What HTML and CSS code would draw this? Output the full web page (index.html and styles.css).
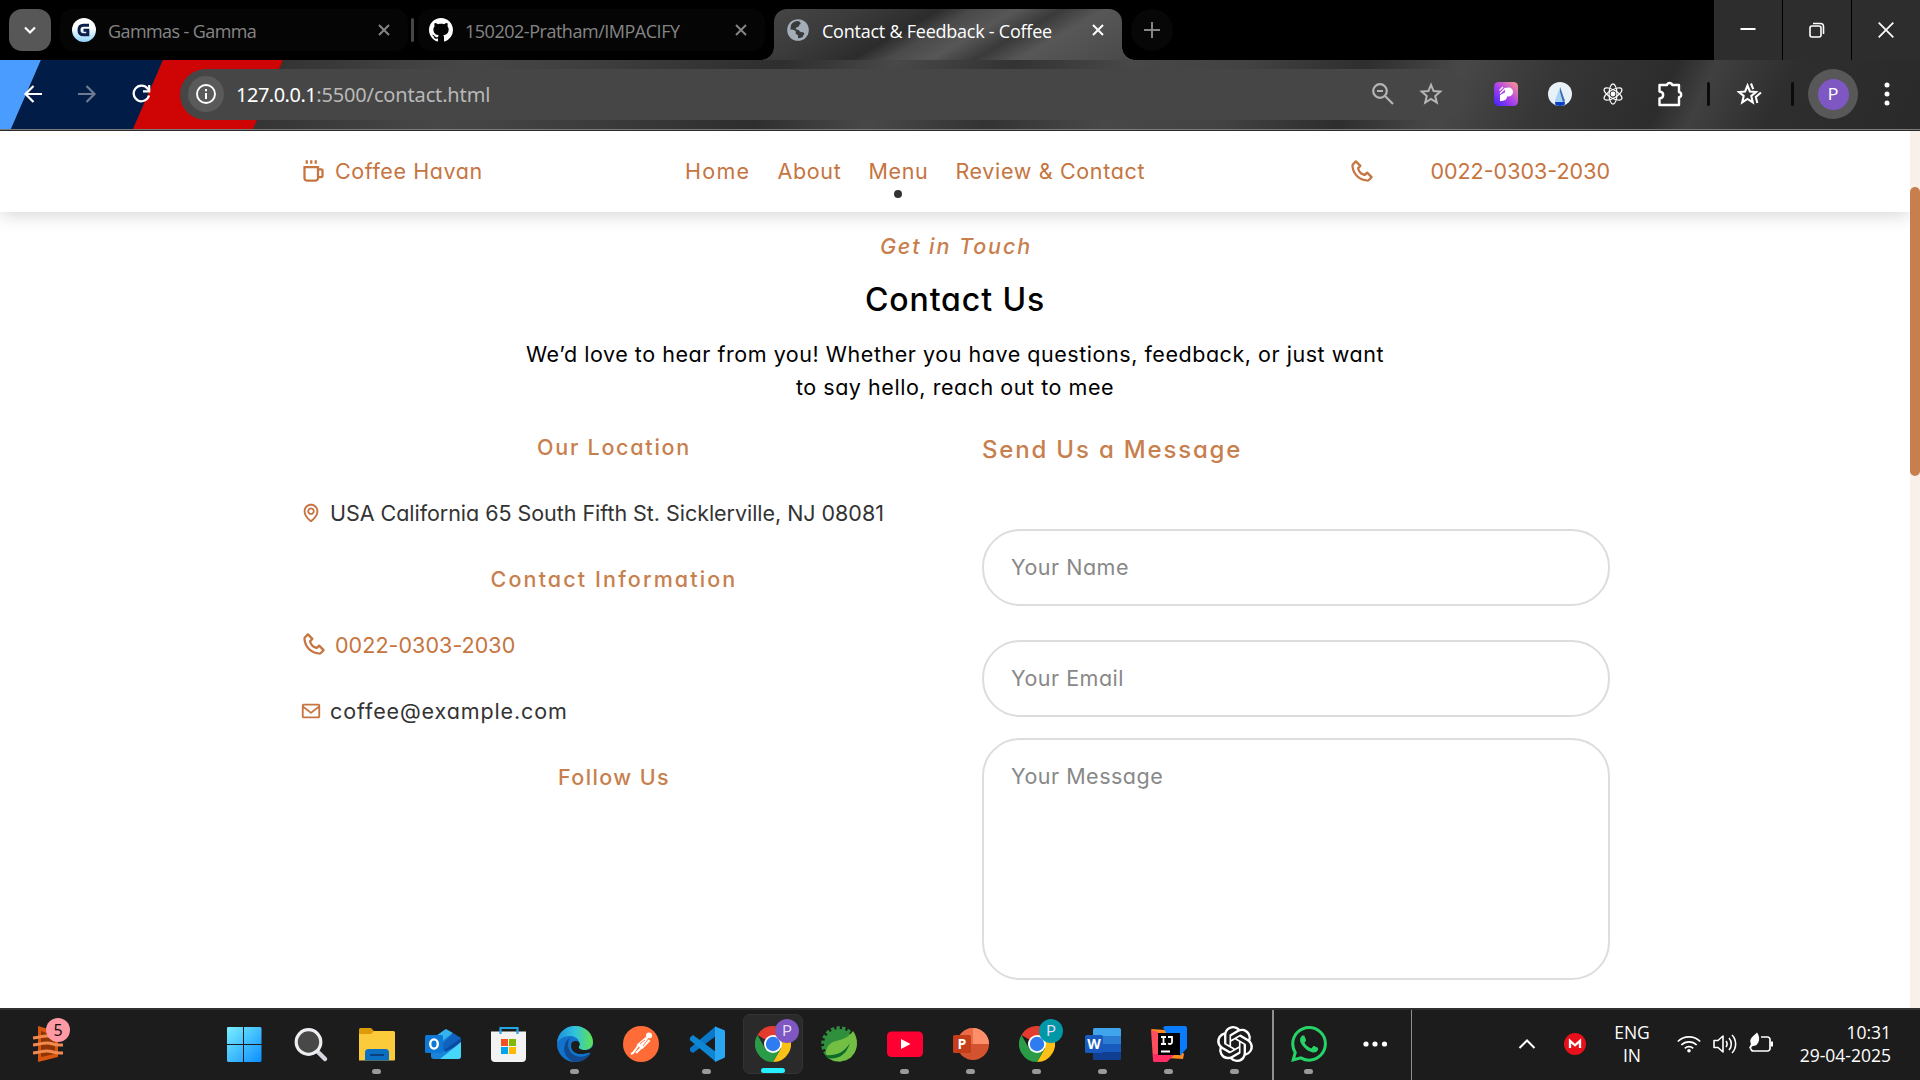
FILE: index.html
```html
<!DOCTYPE html>
<html lang="en">
<head>
<meta charset="utf-8">
<title>Contact &amp; Feedback - Coffee</title>
<link rel="stylesheet" href="styles.css">
</head>
<body>
<svg class="defs" width="0" height="0">
  <symbol id="i-close" viewBox="0 0 14 14"><path d="M2 2l10 10M12 2L2 12" fill="none" stroke="currentColor" stroke-width="2"/></symbol>
  <symbol id="i-phone" viewBox="0 0 24 24"><path fill="currentColor" d="M17.707 12.293a.999.999 0 0 0-1.414 0l-1.594 1.594c-.739-.22-2.118-.72-2.992-1.594s-1.374-2.253-1.594-2.992l1.594-1.594a.999.999 0 0 0 0-1.414l-4-4a.999.999 0 0 0-1.414 0L3.581 5.005c-.38.38-.594.902-.586 1.435.023 1.424.4 6.37 4.298 10.268s8.844 4.274 10.269 4.298h.028c.528 0 1.027-.208 1.405-.586l2.712-2.712a.999.999 0 0 0 0-1.414l-4-4.001zm-.127 6.712c-1.248-.021-5.518-.356-8.873-3.712-3.366-3.366-3.692-7.651-3.712-8.874L7 4.414 9.586 7 8.293 8.293a1 1 0 0 0-.272.912c.024.115.611 2.842 2.271 4.502s4.387 2.247 4.502 2.271a.991.991 0 0 0 .912-.271L17 14.414 19.586 17l-2.006 2.005z"/></symbol>
  <symbol id="i-chrome" viewBox="0 0 36 36">
    <path fill="#e33b2e" d="M18 18 2.4 9A18 18 0 0 1 33.6 9H18z"/>
    <path fill="#fbc116" d="M18 9h15.6A18 18 0 0 1 18 36l7.8-13.5z"/>
    <path fill="#2a9b47" d="M2.4 9A18 18 0 0 0 18 36l7.8-13.5L18 18l-7.8 4.5z"/>
    <circle cx="18" cy="18" r="9" fill="#fff"/><circle cx="18" cy="18" r="7.2" fill="#2f7bf0"/>
  </symbol>
</svg>

<div class="screen">
  <header class="tabstrip">
    <button class="tab-search"><svg width="14" height="14" viewBox="0 0 14 14"><path d="M2 4.5l5 5 5-5" fill="none" stroke="#fff" stroke-width="2.2"/></svg></button>
    <div class="tab">
      <svg class="favicon" width="24" height="24" viewBox="0 0 24 24"><defs><linearGradient id="gg" x2="0" y2="1"><stop offset=".4" stop-color="#fff"/><stop offset="1" stop-color="#8fd4fb"/></linearGradient></defs><circle cx="12" cy="12" r="12" fill="url(#gg)"/><path d="M17 7.200H11.500C8.500 7.200 7 9 7 12c0 3 1.800 4.800 4.500 4.800h4.300v-4.600h-4.300" fill="none" stroke="#0c1f4a" stroke-width="3"/></svg>
      <span class="tab-title gamma">Gammas - Gamma</span>
      <svg class="x" width="14" height="14"><use href="#i-close"/></svg>
    </div>
    <i class="tab-sep"></i>
    <div class="tab second">
      <svg class="favicon" width="24" height="24" viewBox="0 0 16 16"><path fill="#fff" d="M8 0C3.580 0 0 3.580 0 8c0 3.540 2.290 6.530 5.470 7.590.4.070.55-.17.55-.38 0-.19-.01-.82-.01-1.490-2.010.37-2.530-.49-2.690-.94-.09-.23-.48-.94-.82-1.130-.28-.15-.68-.52-.01-.53.63-.01 1.080.58 1.230.82.72 1.210 1.870.87 2.330.66.070-.52.28-.87.51-1.070-1.780-.2-3.640-.89-3.640-3.950 0-.87.31-1.590.82-2.150-.08-.2-.36-1.020.08-2.120 0 0 .67-.21 2.200.82.64-.18 1.320-.27 2-.27s1.360.09 2 .27c1.530-1.040 2.200-.82 2.200-.82.44 1.100.16 1.920.08 2.120.51.56.82 1.270.82 2.150 0 3.070-1.870 3.750-3.650 3.950.29.25.54.73.54 1.480 0 1.070-.01 1.930-.01 2.200 0 .21.15.46.55.38A8.010 8.010 0 0 0 16 8c0-4.420-3.580-8-8-8z"/></svg>
      <span class="tab-title repo">150202-Pratham/IMPACIFY</span>
      <svg class="x" width="14" height="14"><use href="#i-close"/></svg>
    </div>
    <div class="tab active">
      <svg class="favicon" width="24" height="24" viewBox="0 0 24 24"><circle cx="12" cy="12" r="10.800" fill="#a3adb8"/><path d="M12.500 3c-4 0-6 1.500-7.500 4l-.6 4.500c2 .3 3.600.2 5 1.500 1.200 1.200-.4 2 .6 3 .9.800 2 .3 2 2v2.200c2.500 0 4-.5 5-1.700-.2-1.400 1.500-1.600 1.200-3.200-.5-1.400-2-1-3.300-1.300-1.500-.4-1.700-1.800-3-2.200-1.600-.4-2.400-.5-2.200-1.500.3-1.200 2-.8 3-1.800.8-1 .3-2 1.500-2.300 1-.3.500-1.700-1.700-3.200z" fill="#393a3c"/></svg>
      <span class="tab-title coffee">Contact &amp; Feedback - Coffee</span>
      <svg class="x" width="14" height="14"><use href="#i-close"/></svg>
    </div>
    <button class="newtab"><svg width="16" height="16" viewBox="0 0 16 16"><path d="M8 0v16M0 8h16" stroke="#858585" stroke-width="2"/></svg></button>
    <div class="winbtns">
      <span><svg width="16" height="16"><path d="M0.500 7h15" stroke="#fff" stroke-width="2"/></svg></span>
      <span><svg width="16" height="16" viewBox="0 0 16 16" fill="none" stroke="#fff" stroke-width="1.600"><rect x="1" y="4" width="11" height="11" rx="2"/><path d="M4 1.500h7.500a3 3 0 0 1 3 3V12"/></svg></span>
      <span><svg width="16" height="16"><path d="M.7.700l14.600 14.600M15.300.7L.7 15.300" stroke="#fff" stroke-width="1.700"/></svg></span>
    </div>
  </header>

  <div class="toolbar">
    <svg class="stripes" width="284" height="69" viewBox="0 0 284 69"><path fill="#4a9cff" d="M0 0h41L11 69H0z"/><path fill="#001c47" d="M41 0h122l-30 69H11z"/><path fill="#cf0404" d="M163 0h120l-30 69H133z"/></svg>
    <div class="navbtns">
      <svg width="18" height="18" viewBox="0 0 18 18"><path d="M18 9H2M9.500 1L1.500 9l8 8" fill="none" stroke="#fff" stroke-width="2.200"/></svg>
      <svg width="18" height="18" viewBox="0 0 18 18"><path d="M0 9h16M8.500 1l8 8-8 8" fill="none" stroke="#6f7b92" stroke-width="2.200"/></svg>
      <svg width="20" height="20" viewBox="0 0 20 20"><path d="M17 11.500A7.800 7.800 0 1 1 15.500 4.500l2 2.300" fill="none" stroke="#fff" stroke-width="2.200"/><path d="M18.300 1v7.500H11V6.300h5.100V1z" fill="#fff"/></svg>
    </div>
    <div class="omnibox">
      <span class="info"><svg width="20" height="20" viewBox="0 0 20 20"><circle cx="10" cy="10" r="9" fill="none" stroke="#fff" stroke-width="1.900"/><path d="M10 9v6M10 5v2.200" stroke="#fff" stroke-width="2"/></svg></span>
      <span class="url"><b>127.0.0.1</b><span>:5500/contact.html</span></span>
      <svg class="om-zoom" width="22" height="22" viewBox="0 0 22 22" fill="none" stroke="#b5b5b5" stroke-width="2.200"><circle cx="8" cy="8" r="6.800"/><path d="M5 8h6M13 13l8 8"/></svg>
      <svg class="om-star" width="24" height="24" viewBox="0 0 24 24"><path d="M12 2.800l2.600 6.300 6.700.5-5.100 4.400 1.600 6.600L12 17l-5.800 3.600L7.800 14 2.700 9.600l6.700-.5z" fill="none" stroke="#b5b5b5" stroke-width="2"/></svg>
    </div>
    <div class="exts">
      <svg width="24" height="24" viewBox="0 0 24 24"><defs><linearGradient id="pg" x1="0" y1="1" x2="1" y2="0"><stop offset="0" stop-color="#3a22ff"/><stop offset=".5" stop-color="#b044e8"/><stop offset="1" stop-color="#ff9a8a"/></linearGradient></defs><rect width="24" height="24" rx="4.500" fill="url(#pg)"/><path d="M6 19v-6l5-2.500V6.500c4-2 8-.5 8 3.500 0 3.200-2.500 4.800-6 4.500-.3 3-2 4.500-7 4.500z" fill="#fff"/><path d="M5.500 8.500l3.500-3.500M6 11.500l5.500-5.500" stroke="#fff" stroke-width="1.200"/></svg>
      <svg width="24" height="24" viewBox="0 0 24 24"><circle cx="12" cy="12" r="12" fill="#e9f1f8"/><path d="M12 5L7 18.500l.5 4.500h9l.5-4z" fill="#a9d2f7"/><path d="M12 5v5l3 10 2-1z" fill="#3b6fae"/><path d="M7 20h10l-.5 3a12 12 0 0 1-9 0z" fill="#0b3fc4"/></svg>
      <svg width="22" height="22" viewBox="0 0 24 24" fill="none" stroke="#fff" stroke-width="1.300"><ellipse cx="12" cy="12" rx="11" ry="4.300" transform="rotate(30 12 12)"/><ellipse cx="12" cy="12" rx="11" ry="4.300" transform="rotate(90 12 12)"/><ellipse cx="12" cy="12" rx="11" ry="4.300" transform="rotate(150 12 12)"/><circle cx="12" cy="12" r="2" fill="#fff"/></svg>
      <svg class="puzzle" width="26" height="26" viewBox="0 0 26 26"><path d="M2.500 4h7.500a2.700 2.700 0 0 1 5.200 0H22v7a2.700 2.700 0 0 1 0 5.300V24H2.500v-6.500c2.600-.3 3.700-1.600 3.700-3.500S5.100 10.800 2.500 10.500z" fill="none" stroke="#fff" stroke-width="2.400" stroke-linejoin="round"/></svg>
      <i class="tb-sep"></i>
      <svg class="favs" width="26" height="24" viewBox="0 0 26 24" fill="none" stroke="#fff" stroke-width="2.100"><path d="M11.500 3.500l2.400 6 6.100.5-4.700 4 1.500 6.400-5.300-3.500-5.300 3.500L7.700 14 3 10l6.100-.5z"/><path d="M15 1.500l2.200 5.700M25 10.500l-5.200 4.400 1.500 6.200"/></svg>
      <i class="tb-sep"></i>
    </div>
    <span class="avatar"><b>P</b></span>
    <svg class="kebab" width="6" height="26"><circle cx="3" cy="4" r="2.500" fill="#fff"/><circle cx="3" cy="13" r="2.500" fill="#fff"/><circle cx="3" cy="22" r="2.500" fill="#fff"/></svg>
  </div>

  <main class="page">
    <div class="site">
      <nav class="site-nav">
        <a class="brand"><svg width="27" height="27" viewBox="0 0 24 24"><path fill="currentColor" d="M5 2h2v3H5zm4 0h2v3H9zm4 0h2v3h-2zm6 7h-2V7H3v11c0 1.654 1.346 3 3 3h8c1.654 0 3-1.346 3-3h2c1.103 0 2-.897 2-2v-5c0-1.103-.897-2-2-2zm-4 9a1 1 0 0 1-1 1H6a1 1 0 0 1-1-1V9h10v9zm2-2v-5h2l.002 5H17z"/></svg><span>Coffee Havan</span></a>
        <div class="links"><a class="home">Home</a><a>About</a><a class="current">Menu</a><a>Review &amp; Contact</a></div>
        <div class="call"><svg width="27" height="27"><use href="#i-phone"/></svg><span class="num">0022-0303-2030</span></div>
      </nav>
      <section class="intro">
        <p class="eyebrow">Get in Touch</p>
        <h1>Contact Us</h1>
        <p class="lead">We’d love to hear from you! Whether you have questions, feedback, or just want<br>to say hello, reach out to mee</p>
      </section>
      <section class="columns">
        <div class="info-col">
          <h3>Our Location</h3>
          <p><svg width="22" height="22" viewBox="0 0 24 24"><path fill="currentColor" d="M12 14c2.206 0 4-1.794 4-4s-1.794-4-4-4-4 1.794-4 4 1.794 4 4 4zm0-6c1.103 0 2 .897 2 2s-.897 2-2 2-2-.897-2-2 .897-2 2-2z"/><path fill="currentColor" d="M11.420 21.814a.998.998 0 0 0 1.160 0C12.884 21.599 20.029 16.440 20 10c0-4.411-3.589-8-8-8S4 5.589 4 9.995c-.029 6.445 7.116 11.604 7.420 11.819zM12 4c3.309 0 6 2.691 6 6 .021 4.438-4.388 8.423-6 9.730-1.611-1.308-6.021-5.294-6-9.735 0-3.309 2.691-6 6-6z"/></svg><span>USA California 65 South Fifth St. Sicklerville, NJ 08081</span></p>
          <h3 class="contact-info">Contact Information</h3>
          <p class="tel"><svg width="27" height="27"><use href="#i-phone"/></svg><span class="num">0022-0303-2030</span></p>
          <p><svg width="22" height="22" viewBox="0 0 24 24"><path fill="currentColor" d="M20 4H4c-1.103 0-2 .897-2 2v12c0 1.103.897 2 2 2h16c1.103 0 2-.897 2-2V6c0-1.103-.897-2-2-2zm0 2v.511l-8 6.223-8-6.222V6h16zM4 18V9.044l7.386 5.745a.994.994 0 0 0 1.228 0L20 9.044 20.002 18H4z"/></svg><span class="mail">coffee@example.com</span></p>
          <h3 class="follow">Follow Us</h3>
        </div>
        <form class="form-col">
          <h2>Send Us a Message</h2>
          <input type="text" placeholder="Your Name">
          <input type="text" placeholder="Your Email">
          <textarea placeholder="Your Message"></textarea>
        </form>
      </section>
    </div>
    <div class="scroll"><i></i></div>
  </main>

  <footer class="taskbar">
    <div class="widgets"><svg width="32" height="38" viewBox="0 0 32 38"><path d="M5 1l20 6v25L5 37z" fill="#d9560f"/><path d="M8 6l14 5v18L8 32z" fill="#8f3504"/><path d="M0 13c10-1 12-4 20-1 4 1.500 6 1 10 1M0 20c10-1 12-4 20-1 4 1.500 6 1 10 1M0 28c10-1 12-4 20-1 4 1.500 6 1 10 1" fill="none" stroke="#f08a50" stroke-width="3"/></svg><span class="count">5</span></div>
    <div class="apps">
      <span class="app start"><svg width="36" height="36" viewBox="0 0 36 36"><defs><linearGradient id="wg" gradientUnits="userSpaceOnUse" x1="0" y1="0" x2="36" y2="36"><stop offset="0" stop-color="#7df3ff"/><stop offset="1" stop-color="#0a8dff"/></linearGradient></defs><path fill="url(#wg)" d="M2 1h15v17H1V2a1 1 0 0 1 1-1zM18 1h16.500l1 1v16H18zM1 19h16v17H2l-1-1zM18 19h17.500v16l-1 1H18z"/></svg></span>
      <span class="app"><svg width="36" height="36" viewBox="0 0 36 36"><path d="M24 25l8 8" stroke="#d5d7de" stroke-width="4.500" stroke-linecap="round"/><circle cx="15.500" cy="16" r="12.300" fill="#484848" stroke="#eceef2" stroke-width="3.200"/></svg></span>
      <span class="app run"><svg width="36" height="36" viewBox="0 0 36 36"><path d="M0 8V3.500A1.500 1.500 0 0 1 1.500 2H12l3 3v5z" fill="#dd9b08"/><path d="M0 8h12l3-3h19.500A1.500 1.500 0 0 1 36 6.500V33.500a1 1 0 0 1-1 1H0z" fill="#fccb3c"/><path d="M6 34.500v-8A3.500 3.500 0 0 1 9.500 23h17a3.500 3.500 0 0 1 3.500 3.500v8z" fill="#0b6fc2"/><path d="M11 29h14" stroke="#083d75" stroke-width="1.800"/></svg></span>
      <span class="app"><svg width="36" height="36" viewBox="0 0 36 36"><path d="M6 14L20 3.500 36 13v17a3 3 0 0 1-3 3H9a3 3 0 0 1-3-3z" fill="#1a84d8"/><path d="M8 12L21 3l7 4-14 10z" fill="#36b3ee"/><path d="M18 18l18-6v6L20 26z" fill="#0a4aa5"/><path d="M28 7l8 5-18 13v-8z" fill="#0f62bd"/><path d="M36 16v14a3 3 0 0 1-3 3H15z" fill="#46d5fb"/><rect y="9" width="18" height="18" rx="1.500" fill="#0f78d4"/><ellipse cx="9" cy="18" rx="3.800" ry="4.600" fill="none" stroke="#fff" stroke-width="2.400"/></svg></span>
      <span class="app"><svg width="36" height="36" viewBox="0 0 36 36"><path d="M0 5.500h35V32a4 4 0 0 1-4 4H4a4 4 0 0 1-4-4z" fill="#f3f3f3"/><path d="M9.500 8V2h17v6" fill="none" stroke="#22a7e6" stroke-width="2.200"/><path d="M10 13h7v7h-7z" fill="#f25022"/><path d="M18 13h7v7h-7z" fill="#7fba00"/><path d="M10 21h7v7h-7z" fill="#00a4ef"/><path d="M18 21h7v7h-7z" fill="#ffb900"/></svg></span>
      <span class="app run"><svg width="36" height="36" viewBox="0 0 36 36"><defs><linearGradient id="eg" x2="1"><stop offset="0" stop-color="#1d8fe0"/><stop offset=".5" stop-color="#31c3dc"/><stop offset="1" stop-color="#5fe34e"/></linearGradient></defs><circle cx="18" cy="18" r="18" fill="#1173cc"/><path d="M0 17C1 6 9 0 18 0c11 0 18 8 18 16 0 5-4 8-8.500 8-4 0-6.500-1.500-6-3.500 2-3 1-8-5-10C9 9 3 12 0 17z" fill="url(#eg)"/><path d="M13 12c-4 6-2 15 6 18 5 2 11 0 14-3-3 6-9 9-15 9C10 34 5 26 8 18c1-3 3-5 5-6z" fill="#12498f"/><path d="M14.500 17c-1.500 5 1 9 5.500 10.500 5 1.500 10-.5 12-.8 2.500-.2 1.500 2 3 .6l1.500-8.300c-2 4-5 5-8.500 5-4 0-7-1.500-6-3.500 1.500-2 1-4-1-5-2-1-5-.5-6.500 1.500z" fill="#1c1c1c"/></svg></span>
      <span class="app"><svg width="36" height="36" viewBox="0 0 36 36"><circle cx="18" cy="18" r="18" fill="#ff6c37"/><circle cx="26" cy="9.500" r="3" fill="#fff"/><path d="M23 12l-8 7 4 3 7-7zM15 20l-5 7-2 1M18 22l-5 5" fill="#fff" stroke="#fff" stroke-width="2"/><path d="M17 18l5-4M20 20l6-8" stroke="#ff6c37" stroke-width=".9"/></svg></span>
      <span class="app run"><svg width="36" height="36" viewBox="0 0 36 36"><path d="M27 0v10L4 27l-3-2v-3z" fill="#0a78c8"/><path d="M1 11.500L4 9l23 17v10L.8 14z" fill="#0d86d4"/><path d="M26 .5l9 3.500a2 2 0 0 1 1 1.500v25a2 2 0 0 1-1 1.500L26 36z" fill="#2aa5f2"/></svg></span>
      <span class="app run open"><svg width="36" height="36"><use href="#i-chrome"/></svg><b class="badge violet">P</b></span>
      <span class="app"><svg width="36" height="36" viewBox="0 0 36 36"><circle cx="18" cy="18" r="15.800" fill="none" stroke="#2f8f3c" stroke-width="4" stroke-dasharray="3.300 2.200"/><circle cx="18" cy="18" r="15" fill="#2f8f3c"/><path d="M36 18a18 18 0 0 1-30 13C3 26 6 17 15 15c8-2 13-4 17-10 3 4 4 8 4 13z" fill="#72bf44"/><path d="M4 29c10 1 19-2 25-12-4 13-13 17-23 15z" fill="#0d6b2c"/></svg></span>
      <span class="app run"><svg width="36" height="36" viewBox="0 0 36 36"><rect y="5.500" width="36" height="25.500" rx="4.500" fill="#ff0033"/><path d="M14 13l9.500 5-9.500 5z" fill="#fff"/></svg></span>
      <span class="app run"><svg width="36" height="36" viewBox="0 0 36 36"><circle cx="20" cy="18" r="16" fill="#d35230"/><path d="M20 2a16 16 0 0 1 16 16H20z" fill="#ff8f6b"/><path d="M20 2v16H4A16 16 0 0 1 20 2z" fill="#ed6c47"/><rect y="9" width="18" height="18" rx="1.500" fill="#c43e1c"/></svg><b class="letter">P</b></span>
      <span class="app run"><svg width="36" height="36"><use href="#i-chrome"/></svg><b class="badge teal">P</b></span>
      <span class="app run"><svg width="36" height="36" viewBox="0 0 36 36"><path d="M8 3.500A1.500 1.500 0 0 1 9.500 2h25A1.500 1.500 0 0 1 36 3.500V10H8z" fill="#41a5ee"/><path d="M8 10h28v8H8z" fill="#2b7cd3"/><path d="M8 18h28v8H8z" fill="#185abd"/><path d="M8 26h28v6.500a1.500 1.500 0 0 1-1.500 1.500h-25A1.500 1.500 0 0 1 8 32.500z" fill="#103f91"/><rect y="9" width="18" height="18" rx="1.500" fill="#185abd"/></svg><b class="letter">W</b></span>
      <span class="app run"><svg width="36" height="36" viewBox="0 0 36 36"><path d="M0 3l14 1 19 24-1 5-16-1z" fill="#ff8a1f"/><path d="M0 4l7 2v30H4a2 2 0 0 1-2-2z" fill="#ff4f5e"/><path d="M2 28h22l-8 8H4a2 2 0 0 1-2-2z" fill="#ff2d63"/><path d="M12 1.500L14 0h20a2 2 0 0 1 2 2v20l-7 8z" fill="#087cfa"/><path d="M7 7h22v22H7z" fill="#000"/><path d="M10 11h5M12.500 11v7M10 18h5M17 11h4v5c0 2-2 2.500-4 1.500M10 25.500h9" fill="none" stroke="#fff" stroke-width="1.800"/></svg></span>
      <span class="app run"><svg width="36" height="36" viewBox="0 0 24 24"><path fill="#fff" d="M22.282 9.821a5.985 5.985 0 0 0-.516-4.910 6.046 6.046 0 0 0-6.510-2.900A6.065 6.065 0 0 0 4.981 4.182a5.985 5.985 0 0 0-3.998 2.900 6.046 6.046 0 0 0 .743 7.097 5.980 5.980 0 0 0 .510 4.911 6.051 6.051 0 0 0 6.515 2.900A5.985 5.985 0 0 0 13.260 24a6.056 6.056 0 0 0 5.772-4.206 5.990 5.990 0 0 0 3.998-2.900 6.056 6.056 0 0 0-.748-7.073zM13.260 22.430a4.476 4.476 0 0 1-2.876-1.040l.141-.081 4.779-2.758a.795.795 0 0 0 .393-.681v-6.737l2.020 1.169a.071.071 0 0 1 .038.052v5.583a4.504 4.504 0 0 1-4.495 4.493zM3.600 18.304a4.470 4.470 0 0 1-.535-3.014l.142.085 4.783 2.759a.771.771 0 0 0 .781 0l5.843-3.369v2.332a.080.080 0 0 1-.033.062L9.740 19.950a4.500 4.500 0 0 1-6.140-1.646zM2.341 7.896a4.485 4.485 0 0 1 2.366-1.973V11.600a.766.766 0 0 0 .388.677l5.814 3.354-2.020 1.169a.076.076 0 0 1-.071 0l-4.830-2.787A4.504 4.504 0 0 1 2.341 7.872zm16.597 3.855l-5.833-3.387L15.119 7.200a.076.076 0 0 1 .071 0l4.830 2.791a4.494 4.494 0 0 1-.676 8.105v-5.678a.790.790 0 0 0-.407-.667zm2.010-3.023l-.141-.085-4.774-2.782a.776.776 0 0 0-.785 0L9.409 9.230V6.897a.066.066 0 0 1 .028-.061l4.830-2.787a4.500 4.500 0 0 1 6.680 4.660zm-12.640 4.135l-2.020-1.164a.080.080 0 0 1-.038-.057V6.074a4.500 4.500 0 0 1 7.376-3.453l-.142.080L8.704 5.460a.795.795 0 0 0-.393.681zm1.097-2.365l2.602-1.500 2.607 1.500v2.999l-2.597 1.500-2.607-1.500z"/></svg></span>
    </div>
    <i class="tk-sep"></i>
    <span class="app run wa"><svg width="36" height="36" viewBox="0 0 24 24"><path fill="#25d366" d="M17.472 14.382c-.297-.149-1.758-.867-2.030-.967-.273-.099-.471-.148-.670.150-.197.297-.767.966-.940 1.164-.173.199-.347.223-.644.075-.297-.150-1.255-.463-2.390-1.475-.883-.788-1.480-1.761-1.653-2.059-.173-.297-.018-.458.130-.606.134-.133.298-.347.446-.520.149-.174.198-.298.298-.497.099-.198.050-.371-.025-.520-.075-.149-.669-1.612-.916-2.207-.242-.579-.487-.500-.669-.510-.173-.008-.371-.010-.570-.010-.198 0-.520.074-.792.372-.272.297-1.040 1.016-1.040 2.479 0 1.462 1.065 2.875 1.213 3.074.149.198 2.096 3.200 5.077 4.487.709.306 1.262.489 1.694.625.712.227 1.360.195 1.871.118.571-.085 1.758-.719 2.006-1.413.248-.694.248-1.289.173-1.413-.074-.124-.272-.198-.570-.347m-5.421 7.403h-.004a9.870 9.870 0 0 1-5.031-1.378l-.361-.214-3.741.982.998-3.648-.235-.374a9.860 9.860 0 0 1-1.510-5.260c.001-5.450 4.436-9.884 9.888-9.884 2.640 0 5.122 1.030 6.988 2.898a9.825 9.825 0 0 1 2.893 6.994c-.003 5.450-4.437 9.884-9.885 9.884m8.413-18.297A11.815 11.815 0 0 0 12.050 0C5.495 0 .160 5.335.157 11.892c0 2.096.547 4.142 1.588 5.945L.057 24l6.305-1.654a11.882 11.882 0 0 0 5.683 1.448h.005c6.554 0 11.890-5.335 11.893-11.893a11.821 11.821 0 0 0-3.480-8.413z"/></svg></span>
    <span class="app"><svg width="26" height="6"><circle cx="4" cy="3" r="2.600" fill="#fff"/><circle cx="13" cy="3" r="2.600" fill="#fff"/><circle cx="22.500" cy="3" r="2.600" fill="#fff"/></svg></span>
    <i class="tk-sep thin"></i>
    <div class="tray">
      <svg width="18" height="12" viewBox="0 0 18 12"><path d="M1.500 10L9 2.500l7.500 7.500" fill="none" stroke="#fff" stroke-width="2"/></svg>
      <svg class="mega" width="22" height="22" viewBox="0 0 22 22"><circle cx="11" cy="11" r="11" fill="#e8101a"/><path d="M6 15V7.800l5 4.500 5-4.500V15" fill="none" stroke="#fff" stroke-width="2.300"/></svg>
      <div class="lang"><span>ENG</span><span>IN</span></div>
      <svg class="wifi" width="24" height="18" viewBox="0 0 24 18" fill="none" stroke="#fff" stroke-width="1.700"><path d="M.8 6.500a16 16 0 0 1 22.400 0M4.300 10a11 11 0 0 1 15.400 0M7.800 13.300a6 6 0 0 1 8.400 0"/><circle cx="12" cy="15.800" r="1.800" fill="#fff" stroke="none"/></svg>
      <svg class="vol" width="24" height="22" viewBox="0 0 24 22" fill="none" stroke="#fff" stroke-width="1.600"><path d="M1 7.500h4L10 3v16l-5-4.500H1z" stroke-linejoin="round"/><path d="M13 8a5 5 0 0 1 0 6M16 5a9 9 0 0 1 0 12M19 2a13 13 0 0 1 0 18"/></svg>
      <svg class="bat" width="25" height="22" viewBox="0 0 25 22"><path d="M12 4h6.500a2.500 2.500 0 0 1 2.500 2.500v9a2.500 2.500 0 0 1-2.500 2.500h-14A2.500 2.500 0 0 1 2 15.500" fill="none" stroke="#fff" stroke-width="1.700"/><path d="M21.500 8.500h2.500v5h-2.500zM8-.5c3 4 3 9-.5 12.500-1.500 1-3 .5-4.500 1.500L1.500 16 0 15l2-4C-.5 5.500 4 3.500 8-.5z" fill="#fff"/></svg>
      <div class="clock"><span>10:31</span><span class="date">29-04-2025</span></div>
    </div>
  </footer>
</div>
</body>
</html>
```
FILE: styles.css
```css
* { box-sizing: border-box; margin: 0; padding: 0; }
body { width: 1920px; height: 1080px; overflow: hidden; background: #fff; font-family: "Noto Sans", "Open Sans", sans-serif; }
.defs { position: absolute; }
svg { display: block; flex: none; overflow: visible; }
button { border: 0; font: inherit; }
.screen { display: flex; flex-direction: column; height: 1080px; }

/* browser tab strip */
.tabstrip { display: flex; height: 60px; background: #000; padding: 9px 0 0 9px; flex: none; }
.tab-search { width: 42px; height: 42px; border-radius: 13px; background: #575757; display: flex; align-items: center; justify-content: center; }
.tab { display: flex; align-items: center; width: 348px; height: 42px; margin-left: 9px; padding: 0 17px 0 12px; border-radius: 13px; background: #050505; color: #858585; }
.tab.second { margin-left: 4px; width: 347px; padding-left: 11px; }
.tab-title { flex: none; margin: 2px 0 0 12px; font-family: "Open Sans", "Noto Sans", sans-serif; font-size: 18px; white-space: nowrap; }
.gamma { letter-spacing: -.6px; }
.repo { letter-spacing: -.48px; }
.coffee { letter-spacing: -.24px; }
.tab .x { margin-left: auto; }
.tab-sep { width: 3px; height: 24px; margin: 9px 0 0 3px; border-radius: 2px; background: #464646; }
.tab.active { position: relative; height: 51px; width: 348px; padding-bottom: 9px; border-radius: 13px 13px 0 0; color: #fff;
  background: linear-gradient(150deg, #454545 0%, #3b3b3b 20%, #2c2c2c 38%, #4a4a4a 46%, #575757 56%, #3a3a3a 66%, #575757 76%, #4a4a4a 100%); }
.tab.active::before, .tab.active::after { content: ""; position: absolute; bottom: 0; width: 13px; height: 13px; }
.tab.active::before { left: -13px; background: radial-gradient(circle at 0 0, transparent 12.500px, #3a3a3a 13px); }
.tab.active::after { right: -13px; background: radial-gradient(circle at 100% 0, transparent 12.500px, #4a4a4a 13px); }
.newtab { width: 42px; height: 42px; margin-left: 9px; border-radius: 50%; background: #070707; display: flex; align-items: center; justify-content: center; }
.winbtns { display: flex; gap: 1px; margin: -9px 0 0 auto; height: 60px; }
.winbtns span { width: 68px; background: #2d2d2d; display: flex; align-items: center; justify-content: center; }

/* browser toolbar */
.toolbar { position: relative; display: flex; align-items: center; flex: none; height: 71px; padding-bottom: 2px; border-bottom: 1px solid #2a2a2a; box-shadow: inset 0 -1px #7b7b7b;
  background: linear-gradient(115deg, #333 0 14%, #474747 24%, #3a3a3a 33%, #2e2e2e 40%, #484848 46%, #333 52%, #484848 58%, #424242 64%, #2e2e2e 70%, #484848 75%, #363636 80%, #2c2c2c 86%, #404040 88%, #2e2e2e 92%, #2a2a2a); }
.stripes { position: absolute; left: 0; top: 0; }
.navbtns { position: relative; display: flex; align-items: center; gap: 36px; width: 180px; padding-left: 24px; }
.omnibox { position: relative; display: flex; align-items: center; width: 1287px; height: 51px; border-radius: 26px; background: #464646; padding: 0 24px 0 8px; }
.info { width: 36px; height: 36px; border-radius: 50%; background: #5a5a5a; display: flex; align-items: center; justify-content: center; }
.url { margin-left: 12px; font-size: 20px; letter-spacing: -.15px; color: #b9b9b9; white-space: nowrap; }
.url b { font-weight: 400; letter-spacing: -.5px; color: #fff; }
.om-zoom { margin-left: auto; }
.om-star { margin-left: 25px; }
.exts { display: flex; align-items: center; margin-left: 27px; gap: 30px; width: 314px; }
.puzzle { margin-left: 3px; }
.tb-sep { width: 3px; height: 24px; border-radius: 2px; background: #0b0b0b; margin: 0 -4px 0 -6px; }
.favs + .tb-sep { margin-left: -1px; }
.avatar { width: 50px; height: 50px; border-radius: 50%; background: #585858; display: flex; align-items: center; justify-content: center; }
.avatar b { width: 31px; height: 31px; border-radius: 50%; background: #7e57c2; color: #fff; font: 400 16px/31px Roboto, sans-serif; text-align: center; }
.kebab { margin-left: 26px; }

/* coffee site */
.page { display: flex; flex: 1; min-height: 0; background: #fff; font-family: Inter, "Open Sans", sans-serif; font-feature-settings: "cv11"; font-size: 21.500px; }
.site { width: 1910px; overflow: hidden; }
.scroll { width: 10px; background: #f9f0ea; padding-top: 56px; }
.scroll i { display: block; height: 289px; border-radius: 5px; background: #c87f4e; }
.site-nav { display: flex; align-items: center; height: 81px; padding: 0 300px 0 300px; color: #c67440; letter-spacing: .66px; box-shadow: 0 4px 16px rgba(0, 0, 0, .15); }
.brand { display: flex; align-items: center; gap: 8px; width: 385px; }
.brand span, .links, .site-nav .num { padding-bottom: 2px; }
.brand span { letter-spacing: .58px; }
.links { display: flex; gap: 27px; }
.links a { position: relative; }
.links .home { letter-spacing: 1.300px; }
.current::after { content: ""; position: absolute; left: 50%; top: 32px; width: 8px; height: 8px; margin-left: -4px; border-radius: 50%; background: #333; }
.num { letter-spacing: 0; }
.call { display: flex; align-items: center; justify-content: space-between; width: 262px; margin-left: auto; }
.intro { text-align: center; color: #000; }
.eyebrow { padding-top: 18px; line-height: 33px; font-style: italic; font-weight: 500; letter-spacing: 1.900px; text-indent: 2px; color: #c87f4e; }
h1 { margin-top: 12px; font-size: 32px; font-weight: 500; line-height: 50px; letter-spacing: .9px; }
.lead { margin-top: 13px; line-height: 33px; letter-spacing: .54px; }
.columns { display: flex; padding: 27px 300px 0 301px; justify-content: space-between; }
.info-col { width: 626px; }
.info-col h3, .info-col p { height: 66px; font-size: 21.500px; line-height: 33px; }
.info-col h3 { text-align: center; font-weight: 500; letter-spacing: 1.750px; color: #c87f4e; }
.info-col .contact-info { letter-spacing: 2.120px; }
.info-col .follow { letter-spacing: 1.400px; }
.info-col p { display: flex; align-items: flex-start; color: #333; letter-spacing: -.04px; }
.info-col .mail { letter-spacing: .88px; }
.info-col svg { color: #c67440; margin: 5px 8px 0 -1px; }
.info-col .tel { color: #c67440; }
.info-col .tel svg { margin: 2px 8px 0 -1px; }
.info-col .num { letter-spacing: .05px; }
.form-col { display: flex; flex-direction: column; width: 628px; padding-top: 1px; }
h2 { font-size: 24px; line-height: 36px; font-weight: 500; letter-spacing: 1.820px; color: #c87f4e; margin-bottom: 61px; }
input, textarea { width: 628px; height: 77px; border: 2px solid #ddd; border-radius: 38px; padding: 0 27px; background: #fff; font: inherit; font-feature-settings: inherit; letter-spacing: .5px; outline: none; resize: none; display: block; }
input { margin-bottom: 34px; padding-bottom: 1px; }
textarea { height: 242px; margin-top: -13px; padding-top: 23px; }
::placeholder { color: #888; opacity: 1; }

/* taskbar */
.taskbar { display: flex; align-items: center; flex: none; height: 72px; padding-bottom: 2px; background: #1c1c1c; border-top: 2px solid #303030; color: #fff; }
.widgets { position: relative; width: 212px; padding-left: 33px; }
.count { position: absolute; left: 46px; top: -7px; width: 24px; height: 24px; border-radius: 50%; background: #ff99a4; color: #111; font-size: 16px; line-height: 24px; text-align: center; }
.apps { display: flex; }
.app { position: relative; width: 66px; height: 60px; display: flex; align-items: center; justify-content: center; }
.app.start { padding-right: 2px; }
.app.run::after { content: ""; position: absolute; left: 28px; bottom: 0; width: 9px; height: 5px; border-radius: 3px; background: #9a9a9a; }
.app.open { width: 60px; margin: 0 3px; border-radius: 7px; background: #2a2a2a; border: 1px solid #333; }
.app.open::after { left: 17px; bottom: 0; width: 24px; background: #26f0ff; }
.badge { position: absolute; right: 3px; top: 4px; width: 24px; height: 24px; border-radius: 50%; color: #e5dcf5; font: 400 15px/24px Roboto, sans-serif; text-align: center; }
.violet { background: #7e57c2; }
.teal { background: #0097a7; right: 7px; top: 5px; }
.letter { position: absolute; left: 15px; top: 21px; width: 18px; font: 700 14px/18px "Open Sans", sans-serif; text-align: center; }
.tk-sep { width: 2px; height: 70px; margin: 0 0 -2px 4px; background: #8f8f8f; }
.tk-sep.thin { width: 1px; margin-left: 3px; }
.wa { margin-left: 2px; }
.tray { display: flex; align-items: center; padding-left: 106px; }
.mega { margin-left: 28px; }
.lang, .clock { display: flex; flex-direction: column; font-size: 17.500px; line-height: 23px; }
.lang { width: 48px; text-align: center; margin-left: 22px; font-family: "Open Sans", sans-serif; }
.wifi { margin-left: 21px; }
.vol { margin-left: 12px; }
.bat { margin-left: 12px; }
.clock { width: 117px; text-align: right; font-family: "Open Sans", sans-serif; }
```
